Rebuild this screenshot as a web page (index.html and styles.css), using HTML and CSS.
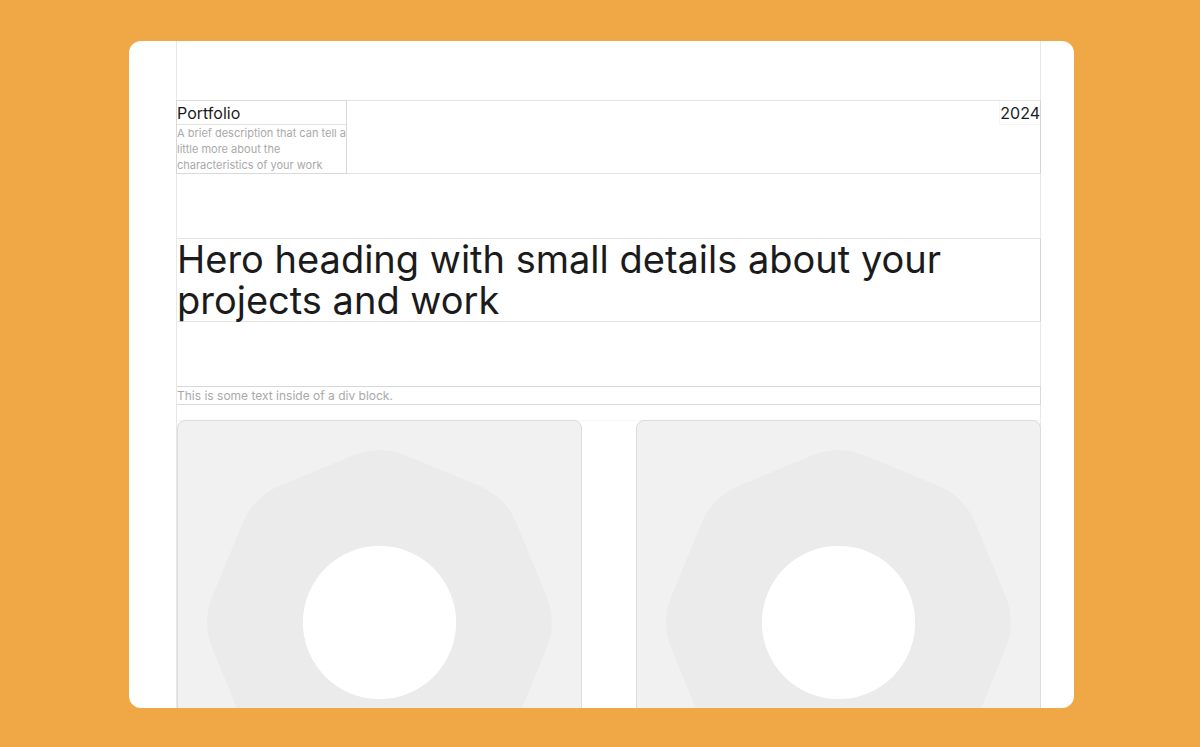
FILE: index.html
```html
<!DOCTYPE html>
<html lang="en">
<head>
<meta charset="utf-8">
<meta name="viewport" content="width=device-width, initial-scale=1">
<title>Portfolio</title>
<link rel="stylesheet" href="styles.css">
</head>
<body>
<div class="window">
  <main class="container">
    <header class="header">
      <div class="intro">
        <p class="label intro-title">Portfolio</p>
        <p class="description">A brief description that can tell a little more about the characteristics of your work</p>
      </div>
      <p class="label year">2024</p>
    </header>
    <h1 class="hero">Hero heading with small details about your projects and work</h1>
    <p class="caption">This is some text inside of a div block.</p>
    <section class="gallery">
      <div class="card">
        <svg class="placeholder" viewBox="0 0 405 405" aria-hidden="true">
          <g transform="translate(202.5 202.5)">
            <path class="nut" d="M0-103 73-73 103 0 73 73 0 103-73 73-103 0-73-73Z"/>
            <circle class="hole" r="77"/>
          </g>
        </svg>
      </div>
      <div class="card">
        <svg class="placeholder" viewBox="0 0 405 405" aria-hidden="true">
          <g transform="translate(202.5 202.5)">
            <path class="nut" d="M0-103 73-73 103 0 73 73 0 103-73 73-103 0-73-73Z"/>
            <circle class="hole" r="77"/>
          </g>
        </svg>
      </div>
    </section>
  </main>
</div>
</body>
</html>
```
FILE: styles.css
```css
* {
  box-sizing: border-box;
}

body {
  display: flex;
  height: 100vh;
  margin: 0;
  padding: 41px 126px 39px 129px;
  background: #f0a846;
  color: #1b1b1b;
  font-family: Inter, "Liberation Sans", sans-serif;
}

p,
h1 {
  margin: 0;
}

.window {
  flex: 1;
  min-width: 0;
  padding: 0 33px 0 47px;
  overflow: hidden;
  border-radius: 12px;
  background: #fff;
}

.container {
  min-height: 100%;
  padding-top: 59px;
  border: solid #e8e8e8;
  border-width: 0 1px;
}

.header,
.hero,
.caption {
  margin-right: -1px;
  border: 1px solid #e4e4e4;
  border-right-color: #d4d4d4;
  border-left: 0;
}

.header {
  display: flex;
  justify-content: space-between;
  align-items: flex-start;
}

.intro {
  width: 171px;
  margin: -1px 0 -1px -1px;
  border: 1px solid #d9d9d9;
}

.label {
  height: 24px;
  font-size: 16px;
  line-height: 24px;
}

.intro-title {
  border-bottom: 1px solid #e2e2e2;
}

.year {
  border: solid #f5f5f5;
  border-width: 0 0 1px 1px;
}

.description {
  color: #a9a9a9;
  font-size: 11px;
  line-height: 16px;
}

.hero {
  margin-top: 64px;
  font-size: 38px;
  font-weight: 400;
  line-height: 41px;
}

.caption {
  margin-top: 64px;
  border-color: #d9d9d9;
  color: #a9a9a9;
  font-size: 12px;
  line-height: 17px;
}

.gallery {
  display: grid;
  grid-template-columns: 1fr 1fr;
  gap: 54px;
  margin: 15px -1px 0 0;
  border-top: 1px solid #f7f7f7;
}

.card {
  margin-top: -1px;
  overflow: hidden;
  border: 1px solid #dcdcdc;
  border-radius: 8px;
  background: #f1f1f1;
}

.placeholder {
  display: block;
  width: 100%;
}

.nut {
  fill: #ebebeb;
  stroke: #ebebeb;
  stroke-width: 140;
  stroke-linejoin: round;
}

.hole {
  fill: #fff;
}
```
